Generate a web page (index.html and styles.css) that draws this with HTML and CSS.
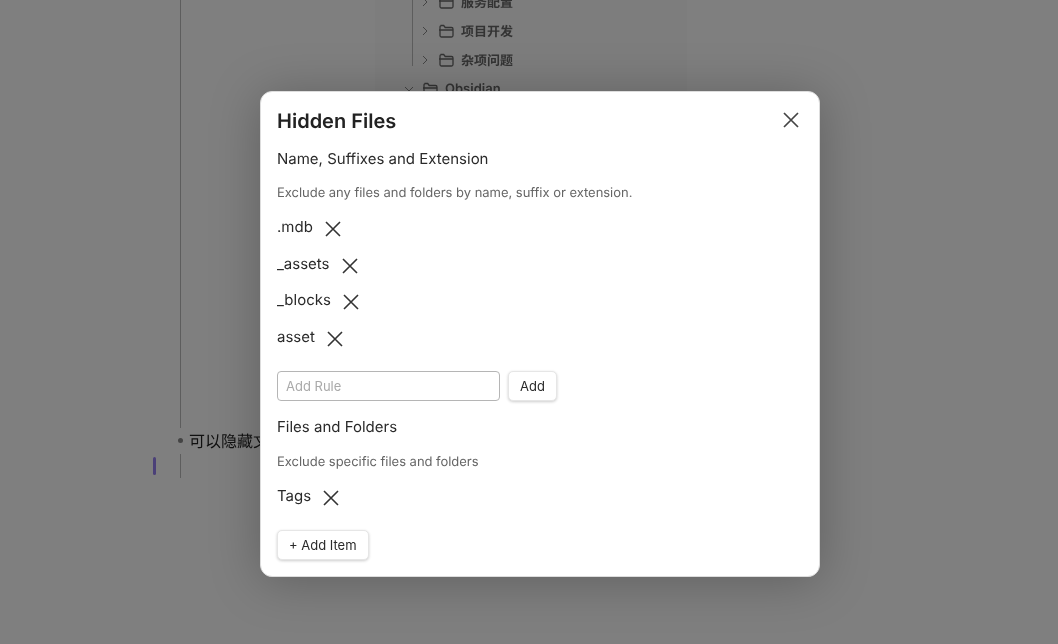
FILE: index.html
```html
<!DOCTYPE html>
<html lang="en">
<head>
    <meta charset="UTF-8">
    <meta name="viewport" content="width=device-width, initial-scale=1.0">
    <title>Hidden Files</title>
    <link rel="stylesheet" href="styles.css">
</head>
<body>

    <div class="workspace">
        <section class="editor">
            <div class="cursor-col">
                <span class="cursor"></span>
            </div>
            <div class="outline">
                <div class="guide guide-long"></div>
                <div class="bullet-row">
                    <span class="bullet"></span>
                    <span class="bullet-text">可以隐藏文件</span>
                </div>
                <div class="guide guide-short"></div>
            </div>
        </section>

        <section class="tree">
            <div class="tree-children">
                <div class="tree-row">
                    <svg class="chevron" viewBox="0 0 10 10"><path d="M3 1l4 4-4 4"/></svg>
                    <svg class="folder" viewBox="0 0 16 14"><path d="M2.5 1.5h3.2l1.5 2h6.3a1.5 1.5 0 0 1 1.5 1.5v6.5a1.5 1.5 0 0 1-1.5 1.5h-10a1.5 1.5 0 0 1-1.5-1.5v-8.5a1.5 1.5 0 0 1 1.5-1.5zM1 6h14"/></svg>
                    <span>服务配置</span>
                </div>
                <div class="tree-row">
                    <svg class="chevron" viewBox="0 0 10 10"><path d="M3 1l4 4-4 4"/></svg>
                    <svg class="folder" viewBox="0 0 16 14"><path d="M2.5 1.5h3.2l1.5 2h6.3a1.5 1.5 0 0 1 1.5 1.5v6.5a1.5 1.5 0 0 1-1.5 1.5h-10a1.5 1.5 0 0 1-1.5-1.5v-8.5a1.5 1.5 0 0 1 1.5-1.5zM1 6h14"/></svg>
                    <span>项目开发</span>
                </div>
                <div class="tree-row">
                    <svg class="chevron" viewBox="0 0 10 10"><path d="M3 1l4 4-4 4"/></svg>
                    <svg class="folder" viewBox="0 0 16 14"><path d="M2.5 1.5h3.2l1.5 2h6.3a1.5 1.5 0 0 1 1.5 1.5v6.5a1.5 1.5 0 0 1-1.5 1.5h-10a1.5 1.5 0 0 1-1.5-1.5v-8.5a1.5 1.5 0 0 1 1.5-1.5zM1 6h14"/></svg>
                    <span>杂项问题</span>
                </div>
            </div>
            <div class="tree-row tree-root">
                <svg class="chevron" viewBox="0 0 10 10"><path d="M1 3l4 4 4-4"/></svg>
                <svg class="folder" viewBox="0 0 16 14"><path d="M2.5 1.5h3.2l1.5 2h6.3a1.5 1.5 0 0 1 1.5 1.5v6.5a1.5 1.5 0 0 1-1.5 1.5h-10a1.5 1.5 0 0 1-1.5-1.5v-8.5a1.5 1.5 0 0 1 1.5-1.5zM1 6h14"/></svg>
                <span>Obsidian</span>
            </div>
        </section>
    </div>

    <div class="modal-bg"></div>

    <div class="modal">
        <svg class="modal-close" viewBox="0 0 16 16"><path d="M1 1l14 14M15 1L1 15"/></svg>
        <h1>Hidden Files</h1>

        <h2>Name, Suffixes and Extension</h2>
        <p class="desc">Exclude any files and folders by name, suffix or extension.</p>
        <ul class="rule-list">
            <li><span>.mdb</span><svg class="remove" viewBox="0 0 16 16"><path d="M1 1l14 14M15 1L1 15"/></svg></li>
            <li><span>_assets</span><svg class="remove" viewBox="0 0 16 16"><path d="M1 1l14 14M15 1L1 15"/></svg></li>
            <li><span>_blocks</span><svg class="remove" viewBox="0 0 16 16"><path d="M1 1l14 14M15 1L1 15"/></svg></li>
            <li><span>asset</span><svg class="remove" viewBox="0 0 16 16"><path d="M1 1l14 14M15 1L1 15"/></svg></li>
        </ul>
        <div class="add-rule">
            <input type="text" placeholder="Add Rule">
            <button>Add</button>
        </div>

        <h2 class="second">Files and Folders</h2>
        <p class="desc desc-second">Exclude specific files and folders</p>
        <ul class="rule-list">
            <li><span>Tags</span><svg class="remove" viewBox="0 0 16 16"><path d="M1 1l14 14M15 1L1 15"/></svg></li>
        </ul>
        <button class="add-item">+ Add Item</button>
    </div>

</body>
</html>
```

FILE: styles.css
```css
html, body {
    margin: 0;
    height: 100%;
    overflow: hidden;
}

body {
    font-family: 'Inter', 'Noto Sans CJK SC', sans-serif;
    text-rendering: geometricPrecision;
    background-color: #fff;
    color: #2a2a2a;
}

.workspace {
    display: flex;
    height: 644px;
    padding-left: 153px;
    box-sizing: border-box;
    filter: blur(0.4px);
}

/* left editor area */
.editor {
    display: flex;
    width: 222px;
}

.cursor-col {
    width: 27px;
    padding-top: 457px;
}

.cursor {
    display: block;
    width: 3px;
    height: 18px;
    border-radius: 2px;
    background-color: #9680f0;
}

.outline {
    flex: 1;
}

.guide {
    width: 1px;
    background-color: #bbb;
}

.guide-long {
    height: 428px;
}

.guide-short {
    height: 24px;
}

.bullet-row {
    display: flex;
    align-items: center;
    height: 26px;
    margin-top: -1px;
    margin-bottom: 1px;
    white-space: nowrap;
}

.bullet {
    width: 5px;
    height: 5px;
    border-radius: 50%;
    background-color: #888;
    margin-left: -2px;
    margin-right: 6px;
}

.bullet-text {
    font-size: 16px;
    color: #222;
}

/* file tree on the right */
.tree {
    width: 312px;
    margin-top: -13px;
    height: 121px;
    background-color: #fafafa;
}

.tree-children {
    height: 79px;
    margin-left: 37px;
    margin-bottom: 9px;
    padding-left: 7px;
    border-left: 1px solid #bbb;
}

.tree-row {
    display: flex;
    align-items: center;
    height: 29px;
    font-size: 13px;
    font-weight: 600;
    color: #666;
}

.tree-root {
    margin-left: 29px;
    height: 28px;
}

.chevron {
    width: 10px;
    height: 10px;
    margin-right: 8px;
    fill: none;
    stroke: #888;
    stroke-width: 1;
}

.folder {
    width: 16px;
    height: 14px;
    margin-right: 7px;
    fill: none;
    stroke: #666;
    stroke-width: 1.3;
}

/* dim layer and dialog */
.modal-bg {
    position: fixed;
    inset: 0;
    background-color: rgba(0, 0, 0, 0.5);
}

.modal {
    position: fixed;
    left: 260px;
    top: 91px;
    width: 560px;
    height: 486px;
    box-sizing: border-box;
    padding: 16px;
    background-color: #fff;
    border: 1px solid #ddd;
    border-radius: 12px;
    box-shadow: 0 4px 50px rgba(0, 0, 0, 0.25);
    transform: translateZ(0);
}

.modal-close {
    position: absolute;
    top: 20px;
    right: 20px;
    width: 16px;
    height: 16px;
    fill: none;
    stroke: #444;
    stroke-width: 1.7;
}

h1 {
    margin: 0 0 15px;
    font-size: 20px;
    line-height: 26px;
    font-weight: 600;
    color: #222;
}

h2 {
    margin: 0 0 14px;
    font-size: 15px;
    line-height: 20px;
    font-weight: 400;
}

h2.second {
    margin-top: 16px;
    margin-bottom: 15px;
}

.desc {
    margin: 0 0 8px;
    font-size: 13px;
    line-height: 20px;
    letter-spacing: -0.03px;
    color: #666;
}

.desc-second {
    margin-bottom: 7.4px;
}

.rule-list {
    list-style: none;
    margin: 0;
    padding: 0;
}

.rule-list li {
    display: flex;
    align-items: center;
    height: 36.5px;
    font-size: 15px;
}

.rule-list li span {
    position: relative;
    top: -2.4px;
}

.remove {
    width: 16px;
    height: 16px;
    margin-left: 12px;
    fill: none;
    stroke: #333;
    stroke-width: 1.6;
}

.add-rule {
    display: flex;
    gap: 8px;
    margin-top: 14px;
}

input {
    width: 223px;
    height: 30px;
    box-sizing: border-box;
    padding: 0 8px;
    font-family: inherit;
    font-size: 13px;
    color: #222;
    background-color: #fff;
    border: 1px solid #b5b5b5;
    border-radius: 4px;
}

input::placeholder {
    color: #aaa;
}

button {
    height: 30px;
    padding: 0 11px;
    font-family: inherit;
    font-size: 13px;
    color: #2a2a2a;
    background-color: #fff;
    border: 1px solid #e6e6e6;
    border-radius: 5px;
    box-shadow: 0 1px 3px rgba(0, 0, 0, 0.2);
}

.add-item {
    margin-top: 14.2px;
}
```
